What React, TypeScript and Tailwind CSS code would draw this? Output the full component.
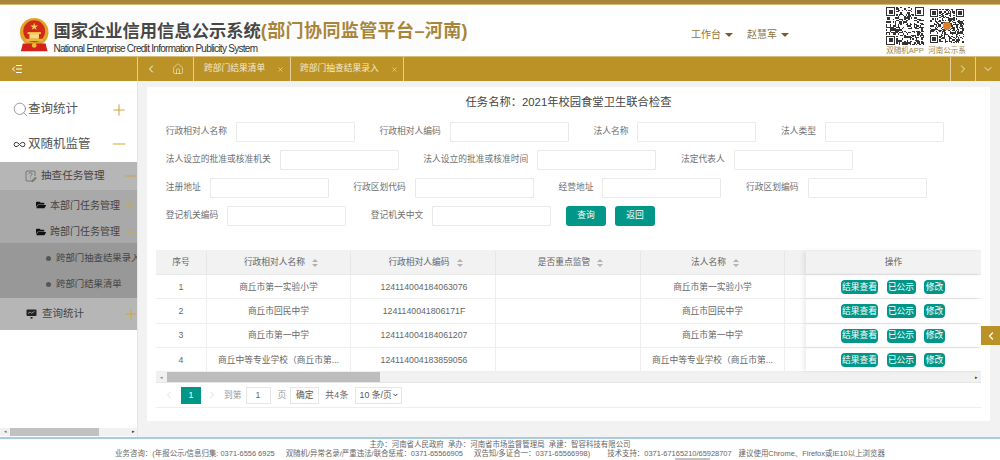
import React from 'react';
import { ChevronDown, ChevronLeft, ChevronRight, House, IndentDecrease, Infinity as InfinityIcon, Minus, Plus, Search, X } from 'lucide-react';
import { FaFolderOpen } from 'react-icons/fa';

const cjk = "font-['Liberation_Sans','Noto_Sans_CJK_SC',sans-serif]";

const QrCode = ({ size, seed, dot }: { size: number; seed: number; dot?: boolean }) => {
    const n = 29;
    const cells: React.ReactNode[] = [];
    let s = seed;
    for (let y = 0; y < n; y++) {
        for (let x = 0; x < n; x++) {
            s = (s * 9301 + 49297) % 233280;
            const corner = (x < 8 && y < 8) || (x > n - 9 && y < 8) || (x < 8 && y > n - 9);
            if (!corner && s / 233280 > 0.52) {
                cells.push(<rect key={`${x}-${y}`} x={x} y={y} width="1" height="1" />);
            }
        }
    }
    const finder = (x: number, y: number) => (
        <g key={`f${x}${y}`}>
            <rect x={x} y={y} width="7" height="7" />
            <rect x={x + 1} y={y + 1} width="5" height="5" fill="#fff" />
            <rect x={x + 2} y={y + 2} width="3" height="3" />
        </g>
    );
    return (
        <svg width={size} height={size} viewBox={`0 0 ${n} ${n}`} fill="#333" shapeRendering="crispEdges">
            {cells}
            {finder(0, 0)}
            {finder(n - 7, 0)}
            {finder(0, n - 7)}
            {dot && <circle cx="14.5" cy="14.5" r="3.4" fill="#d9802e" shapeRendering="auto" />}
        </svg>
    );
};

const Emblem = () => (
    <svg width="32" height="36" viewBox="0 0 32 36">
        <circle cx="16" cy="15" r="15" fill="#e0a526" />
        <circle cx="16" cy="14" r="11.5" fill="#cf2a1c" />
        <polygon points="16,5 17,8 20,8 17.6,9.8 18.5,12.6 16,11 13.5,12.6 14.4,9.8 12,8 15,8" fill="#f4cf4c" />
        <rect x="9" y="15" width="14" height="2" fill="#f4cf4c" />
        <rect x="11" y="17" width="10" height="5" fill="#f7dc7a" />
        <rect x="7" y="22" width="18" height="2.5" fill="#e7b93a" />
        <path d="M4 27 L28 27 L30 35 L2 35 Z" fill="#d3221a" />
        <circle cx="16" cy="29" r="2.5" fill="#eab93a" />
    </svg>
);

const TaskIcon = () => (
    <svg width="12" height="12" viewBox="0 0 12 12" fill="none" stroke="#666" strokeWidth="0.8" className="mr-[4px] shrink-0">
        <path d="M8 11 H2 a1 1 0 0 1 -1 -1 V2 a1 1 0 0 1 1 -1 H9 a1 1 0 0 1 1 1 V6" />
        <path d="M4 4 a1.5 1.5 0 1 1 2 1.4 c-.5 .2 -.6 .6 -.6 1.1 M5.4 7.6 v.8" />
        <path d="M7 10.6 L10.4 7.2 L11.4 8.2 L8 11.6 H7 Z" fill="#888" />
    </svg>
);

const MonitorIcon = () => (
    <svg width="11" height="10" viewBox="0 0 11 10" className="mr-[5px] shrink-0">
        <rect x="0.5" y="0.5" width="10" height="6.5" rx="1" fill="#222" />
        <path d="M2 4.5 L4 3 L5.5 4.2 L8.5 2.4" stroke="#ddd" strokeWidth="0.6" fill="none" />
        <rect x="4.5" y="8" width="2" height="1.6" fill="#222" />
    </svg>
);

const SortCaret = () => (
    <svg width="6" height="8" viewBox="0 0 6 8" fill="#b2b2b2" className="ml-[7px] shrink-0">
        <polygon points="3,0 6,3 0,3" />
        <polygon points="3,8 6,5 0,5" />
    </svg>
);

const Field = ({ label }: { label: string }) => (
    <div className="flex items-center gap-[9px]">
        <span className="text-[8.75px] text-[#707070] whitespace-nowrap">{label}</span>
        <div className="h-5 w-[119px] border border-[#e9e9e9] bg-white rounded-[1px]" />
    </div>
);

const rows = [
    { no: '1', name: '商丘市第一实验小学', code: '124114004184063076' },
    { no: '2', name: '商丘市回民中学', code: '1241140041806171F' },
    { no: '3', name: '商丘市第一中学', code: '124114004184061207' },
    { no: '4', name: '商丘中等专业学校（商丘市第...', code: '124114004183859056' },
];

const gridCols = 'grid grid-cols-[51px_144px_145px_145px_144px_21px_175px]';

const Sidebar = () => (
    <aside className="w-[138px] shrink-0 bg-white border-r border-[#e6e6e6] flex flex-col">
        <div className="h-[33px] mt-[12px] flex items-center pl-[12px] pr-[9px] text-[#555]">
            <Search size={17} strokeWidth={1} className="text-[#777] -mr-[1px]" />
            <span className="text-[12.5px]">查询统计</span>
            <Plus size={18} strokeWidth={1.4} className="ml-auto text-[#d3a533]" />
        </div>
        <div className="h-9 flex items-center pl-[13px] pr-[8px] text-[#555]">
            <InfinityIcon size={13} strokeWidth={1.8} className="text-[#333] mr-[2px]" />
            <span className="text-[12.5px]">双随机监管</span>
            <Minus size={20} strokeWidth={1.2} className="ml-auto text-[#d3a533]" />
        </div>
        <div className="text-[#444] overflow-hidden">
            <div className="h-7 bg-[#b6b6b6] flex items-center pl-[25px]">
                <TaskIcon />
                <span className="text-[10.6px]">抽查任务管理</span>
                <Minus size={18} strokeWidth={1.2} className="ml-auto -mr-[3px] text-[#cda03a]" />
            </div>
            <div className="bg-[#a9a9a9]">
                <div className="h-[30px] flex items-center pl-[36px]">
                    <FaFolderOpen size={10} className="text-[#111] mr-[4px] shrink-0" />
                    <span className="text-[10px] whitespace-nowrap">本部门任务管理</span>
                    <Plus size={12} strokeWidth={1.6} className="ml-auto mr-px text-[#d3a533]" />
                </div>
                <div className="h-[23px] flex items-center pl-[36px]">
                    <FaFolderOpen size={10} className="text-[#111] mr-[4px] shrink-0" />
                    <span className="text-[10px] whitespace-nowrap">跨部门任务管理</span>
                    <Minus size={14} strokeWidth={1.5} className="ml-auto -mr-px text-[#d3a533]" />
                </div>
            </div>
            <div className="bg-[#989898] h-[55px] flex flex-col">
                <div className="h-[30px] flex items-center pl-[46px] whitespace-nowrap">
                    <span className="w-[5px] h-[5px] rounded-full bg-[#555] mr-[5px] shrink-0" />
                    <span className="text-[9.4px]">跨部门抽查结果录入</span>
                </div>
                <div className="h-[22px] flex items-center pl-[46px] whitespace-nowrap">
                    <span className="w-[5px] h-[5px] rounded-full bg-[#555] mr-[5px] shrink-0" />
                    <span className="text-[9.4px]">跨部门结果清单</span>
                </div>
            </div>
            <div className="h-8 bg-[#b6b6b6] flex items-center pl-[26px]">
                <MonitorIcon />
                <span className="text-[10.5px]">查询统计</span>
                <Plus size={16} strokeWidth={1.4} className="ml-auto -mr-[2px] text-[#d3a533]" />
            </div>
        </div>
        <div className="mt-auto mb-px h-2 bg-[#f1f1f1] flex items-center">
            <span className="text-[5px] text-[#777] w-[10px] text-center">◂</span>
            <div className="h-full w-[89px] bg-[#c1c1c1]" />
            <span className="ml-auto text-[5px] text-[#333] mr-[2px]">▸</span>
        </div>
    </aside>
);

const NavBar = () => (
    <nav className="h-[25px] shrink-0 bg-[#bb9225] border-t border-[#d7bd7a] flex text-white">
        <div className="w-[138px] flex items-center pl-[11px] border-r border-[#e2cf9e]">
            <IndentDecrease size={12} />
        </div>
        <div className="w-[25px] flex items-center justify-center">
            <ChevronLeft size={12} strokeWidth={2} />
        </div>
        <div className="w-[31px] flex items-center justify-center border-r border-[#e2cf9e]">
            <House size={12} strokeWidth={1} />
        </div>
        <div className="w-[97px] flex items-center pl-[10px] text-[8.75px] border-r border-[#e2cf9e]">
            <span className="text-[#f4ead0]">跨部门结果清单</span>
            <X size={7} className="ml-[12px] text-[#f1e5c6]" />
        </div>
        <div className="w-[113px] flex items-center pl-[9px] text-[8.75px] border-r border-[#e2cf9e]">
            <span className="text-[#f4ead0]">跨部门抽查结果录入</span>
            <X size={7} className="ml-[12px] text-[#f1e5c6]" />
        </div>
        <div className="ml-auto w-[25px] flex items-center justify-center border-l border-[#e2cf9e]">
            <ChevronRight size={12} strokeWidth={1.6} />
        </div>
        <div className="w-[25px] flex items-center justify-center border-l border-[#e2cf9e]">
            <ChevronDown size={12} strokeWidth={1.6} />
        </div>
    </nav>
);

const Caret = () => <i className="w-0 h-0 border-x-4 border-x-transparent border-t-[4px] border-t-[#7d5a2a]" />;

const Header = () => (
    <header className="h-[51px] shrink-0 bg-white flex items-start">
        <div className="mt-[6px] ml-[10px] w-[458px] h-[42px] bg-[#fcfcfc] flex pl-[9px] pt-[6px]">
            <Emblem />
            <div className="ml-[4px] mt-[2px] flex flex-col">
                <div className="text-[17.3px] leading-[24px] font-bold whitespace-nowrap text-[#474747]">
                    国家企业信用信息公示系统<span className="text-[18px] tracking-[0.4px] text-[#a8853a]">(部门协同监管平台–河南)</span>
                </div>
                <div className="text-[10px] leading-[11px] tracking-[-0.72px] text-[#333] whitespace-nowrap">
                    National Enterprise Credit Information Publicity System
                </div>
            </div>
        </div>
        <div className="ml-auto flex items-center gap-[14px] mt-[22px] text-[10px] text-[#8f7442]">
            <span className="flex items-center gap-[4px]">工作台<Caret /></span>
            <span className="flex items-center gap-[4px]">赵慧军<Caret /></span>
        </div>
        <div className="ml-[97px] mr-[34px] flex gap-[4px] mt-[2px]">
            <div className="flex flex-col items-center w-[38px]">
                <QrCode size={38} seed={17} />
                <span className="text-[7.5px] leading-[10px] text-[#a08544] whitespace-nowrap mt-px">双随机APP</span>
            </div>
            <div className="flex flex-col items-center w-[38px] pt-[2px]">
                <QrCode size={34} seed={123} dot />
                <span className="text-[7.5px] leading-[10px] text-[#a08544] whitespace-nowrap mt-[3px]">河南公示系</span>
            </div>
        </div>
    </header>
);

const ResultTable = () => (
    <div className="mt-6 border-b border-[#eeeeee] text-[8.75px] text-[#666]">
        <div className={`${gridCols} h-[25px] pt-px bg-[#f2f2f2] border-b border-[#e9e9e9]`}>
            <div className="flex items-center justify-center border-r border-[#e6e6e6]">序号</div>
            <div className="flex items-center justify-center pl-[5px] border-r border-[#e6e6e6]">行政相对人名称<SortCaret /></div>
            <div className="flex items-center justify-center pl-[5px] border-r border-[#e6e6e6]">行政相对人编码<SortCaret /></div>
            <div className="flex items-center justify-center pl-[5px] border-r border-[#e6e6e6]">是否重点监管<SortCaret /></div>
            <div className="flex items-center justify-center pl-[5px] border-r border-[#e6e6e6]">法人名称<SortCaret /></div>
            <div />
            <div className="flex items-center justify-center shadow-[-3px_0_4px_rgba(0,0,0,0.07)]">操作</div>
        </div>
        {rows.map((row) => (
            <div key={row.no} className={`${gridCols} h-[24.33px] border-b border-[#eeeeee]`}>
                <div className="flex items-center justify-center pt-px border-r border-[#eeeeee]">{row.no}</div>
                <div className="flex items-center justify-center pt-px border-r border-[#eeeeee] whitespace-nowrap">{row.name}</div>
                <div className="flex items-center justify-center pt-px pl-[2px] border-r border-[#eeeeee]">{row.code}</div>
                <div className="border-r border-[#eeeeee]" />
                <div className="flex items-center justify-center pt-px border-r border-[#eeeeee] whitespace-nowrap">{row.name}</div>
                <div />
                <div className="flex items-center pt-px pl-[35px] gap-[8.5px] shadow-[-3px_0_4px_rgba(0,0,0,0.07)] text-white">
                    <span className="h-[14px] w-[37px] bg-[#009688] rounded-[4px] flex items-center justify-center">结果查看</span>
                    <span className="h-[14px] w-[29px] bg-[#009688] rounded-[4px] flex items-center justify-center">已公示</span>
                    <span className="h-[14px] w-[21px] bg-[#009688] rounded-[4px] flex items-center justify-center">修改</span>
                </div>
            </div>
        ))}
        <div className="h-[11px] bg-[#f1f1f1] flex items-center border-b border-[#e6e6e6]">
            <span className="text-[5px] text-[#888] w-[11px] text-center">◂</span>
            <div className="h-full w-[213px] bg-[#bdbdbd]" />
            <span className="ml-auto text-[5px] text-[#333] mr-[3px]">▸</span>
        </div>
        <div className="h-[24px] flex items-center pl-[7px] text-[#999] whitespace-nowrap">
            <ChevronLeft size={12} strokeWidth={1} className="text-[#bbb]" />
            <span className="ml-[6px] w-5 h-[17px] bg-[#009688] text-white flex items-center justify-center">1</span>
            <ChevronRight size={12} strokeWidth={1} className="ml-[5px] text-[#bbb]" />
            <span className="ml-[6px]">到第</span>
            <span className="ml-[4px] w-[25px] h-[17px] border border-[#e6e6e6] text-[#666] flex items-center justify-center">1</span>
            <span className="ml-[7px]">页</span>
            <span className="ml-[4px] w-[29px] h-[17px] border border-[#e6e6e6] text-[#555] flex items-center justify-center">确定</span>
            <span className="ml-[6px] text-[#666] tracking-[0.3px]">共4条</span>
            <span className="ml-[6px] w-[47px] h-[17px] border border-[#e6e6e6] text-[#555] flex items-center pl-1">
                10 条/页
                <ChevronDown size={8} strokeWidth={3} className="ml-auto mr-[2px] text-[#222]" />
            </span>
        </div>
    </div>
);

export default function App() {
    return (
        <div className={`w-[1000px] h-[460px] overflow-hidden flex flex-col bg-white relative ${cjk}`}>
            <div className="h-[5px] shrink-0 bg-[#a9853a] border-b border-[#d6b871]" />
            <Header />
            <NavBar />
            <div className="flex-1 flex min-h-0">
                <Sidebar />
                <main className="flex-1 bg-[#f2f2f2] pt-[6px] pl-[9px] pr-[10px] pb-[16px]">
                    <div className="h-full bg-white px-[9px] pt-2">
                        <h2 className="text-center text-[11.3px] leading-[14px] text-[#444] font-normal">
                            任务名称：2021年校园食堂卫生联合检查
                        </h2>
                        <div className="mt-[13px] ml-[9.75px] flex flex-col gap-2">
                            <div className="flex gap-[24.6px]">
                                <Field label="行政相对人名称" />
                                <Field label="行政相对人编码" />
                                <Field label="法人名称" />
                                <Field label="法人类型" />
                            </div>
                            <div className="flex gap-[24.6px]">
                                <Field label="法人设立的批准或核准机关" />
                                <Field label="法人设立的批准或核准时间" />
                                <Field label="法定代表人" />
                            </div>
                            <div className="flex gap-[24.6px]">
                                <Field label="注册地址" />
                                <Field label="行政区划代码" />
                                <Field label="经营地址" />
                                <Field label="行政区划编码" />
                            </div>
                            <div className="flex gap-[24.6px] items-center">
                                <Field label="登记机关编码" />
                                <Field label="登记机关中文" />
                                <div className="flex gap-[9px] -ml-[10px] text-[8.75px] text-white">
                                    <span className="w-10 h-5 bg-[#009688] rounded-[3px] flex items-center justify-center">查询</span>
                                    <span className="w-10 h-5 bg-[#009688] rounded-[3px] flex items-center justify-center">返回</span>
                                </div>
                            </div>
                        </div>
                        <ResultTable />
                    </div>
                </main>
            </div>
            <footer className="h-[23px] shrink-0 border-t-2 border-[#a9cbe0] bg-white text-[7.45px] leading-[9px] text-[#666] pt-px">
                <div className="text-center">主办：河南省人民政府&nbsp; 承办：河南省市场监督管理局&nbsp; 承建：智容科技有限公司</div>
                <div className="flex justify-center whitespace-nowrap">
                    <span>业务咨询：(年报公示/信息归集: 0371-6556 6925</span>
                    <span className="ml-[11px]">双随机/异常名录/严重违法/联合惩戒：0371-65566905</span>
                    <span className="ml-[11px]">双告知/多证合一：0371-65566998)</span>
                    <span className="ml-[17px]">技术支持：0371-67165210/65928707</span>
                    <span className="ml-[7px]">建议使用Chrome、Firefox或IE10以上浏览器</span>
                </div>
            </footer>
            <div className="absolute left-[675px] bottom-0 w-[35px] h-[2px] bg-[#c1c1c1]" />
            <div className="absolute left-[981px] top-[326px] w-[19px] h-[19px] bg-[#bb9225] flex items-center justify-center text-white">
                <ChevronLeft size={12} strokeWidth={2.4} />
            </div>
        </div>
    );
}
